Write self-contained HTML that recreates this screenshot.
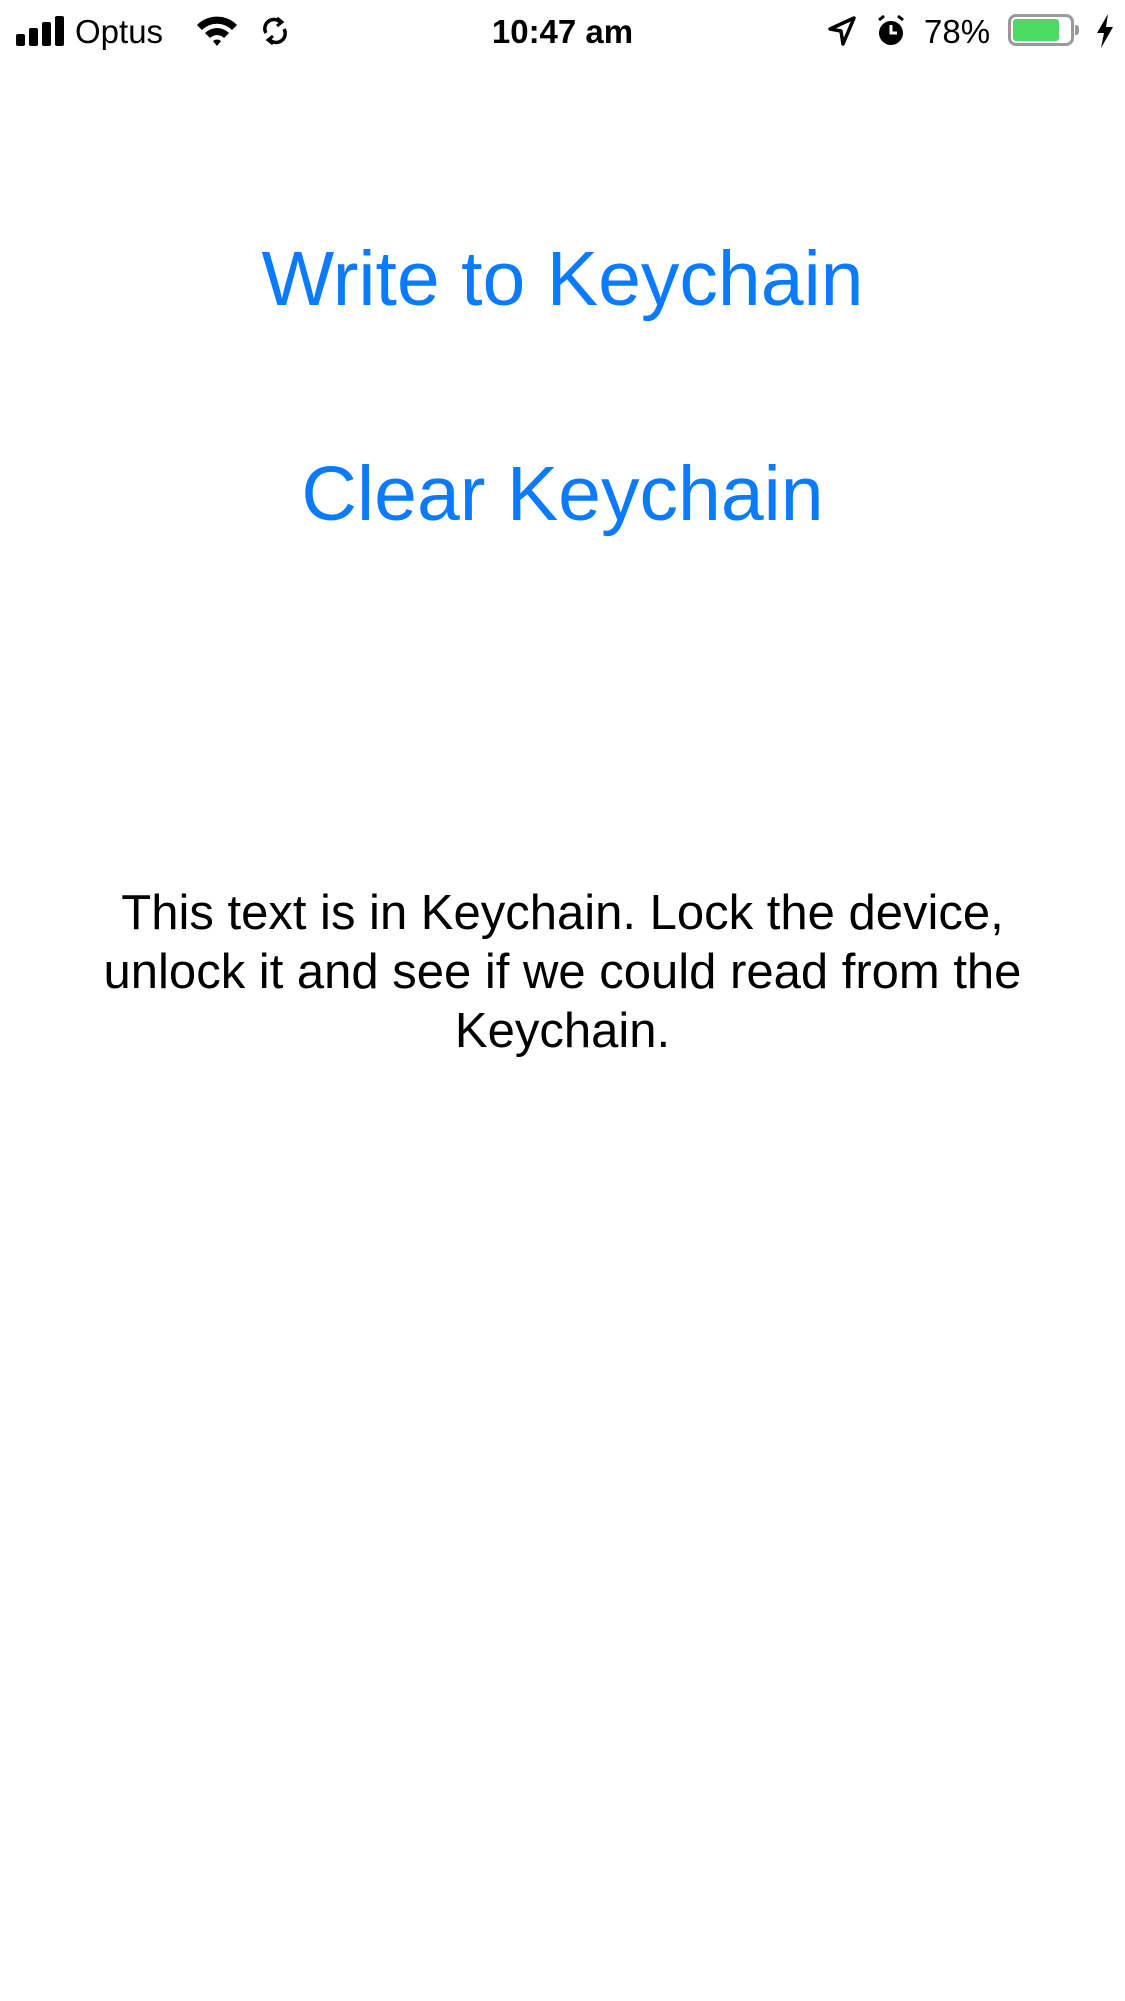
<!DOCTYPE html>
<html><head><meta charset="utf-8"><style>
html,body{margin:0;padding:0;background:#fff;width:1125px;height:2001px;overflow:hidden;font-family:"Liberation Sans",sans-serif;}
.a{position:absolute;white-space:nowrap;}
.btn{left:0;width:1125px;text-align:center;color:#0a7aff;font-size:77px;line-height:78px;}
.body{left:0;width:1125px;text-align:center;color:#000;font-size:49px;line-height:59px;}
.sb{font-size:33px;line-height:33px;color:#000;}
</style></head><body>
<svg class="a" style="left:16px;top:16px" width="52" height="30" viewBox="0 0 52 30">
<rect x="0" y="18" width="9" height="12" rx="2"/><rect x="13" y="12" width="9" height="18" rx="2"/><rect x="26" y="6" width="9" height="24" rx="2"/><rect x="39" y="0" width="9" height="30" rx="2"/></svg>
<div class="a sb" style="left:75px;top:15px">Optus</div>
<svg class="a" style="left:195px;top:14px" width="44" height="34" viewBox="0 0 44 34">
<path d="M2 11 A28 28 0 0 1 42 11 L37 16 A21 21 0 0 0 7 16Z"/><path d="M10 19 A17 17 0 0 1 34 19 L29 24 A10 10 0 0 0 15 24Z"/><path d="M18 27 A6 6 0 0 1 26 27 L22 32Z"/></svg>
<svg class="a" style="left:262px;top:16px" width="26" height="30" viewBox="0 0 26 30" fill="none" stroke="#000" stroke-width="3.5">
<path d="M4 17 A9 9 0 0 1 18 6"/><path d="M22 13 A9 9 0 0 1 8 24"/><path d="M15 2 L20 6 L15 10" stroke-width="3"/><path d="M11 20 L6 24 L11 28" stroke-width="3"/></svg>
<div class="a sb" style="left:0;width:1125px;text-align:center;top:15px;font-weight:bold">10:47 am</div>
<svg class="a" style="left:828px;top:16px" width="28" height="30" viewBox="0 0 28 30"><path d="M26 2 L2 13 L13 15 L15 28Z" fill="none" stroke="#000" stroke-width="3.5" stroke-linejoin="round"/></svg>
<svg class="a" style="left:876px;top:14px" width="30" height="34" viewBox="0 0 30 34"><circle cx="15" cy="19" r="12"/><path d="M15 11 V19 H21" stroke="#fff" stroke-width="3" fill="none"/><path d="M3 6 L8 2 M27 6 L22 2" stroke="#000" stroke-width="3"/></svg>
<div class="a sb" style="left:924px;top:15px">78%</div>
<div class="a" style="left:1008px;top:14px;width:66px;height:32px;border:3px solid #999;border-radius:8px;box-sizing:border-box"></div>
<div class="a" style="left:1013px;top:19px;width:46px;height:22px;background:#4cd964;border-radius:3px"></div>
<div class="a" style="left:1075px;top:25px;width:4px;height:10px;background:#999;border-radius:0 3px 3px 0"></div>
<svg class="a" style="left:1095px;top:14px" width="20" height="34" viewBox="0 0 20 34"><path d="M13 0 L2 19 H9 L6 34 L18 13 H11Z"/></svg>
<div class="a btn" style="top:240px">Write to Keychain</div>
<div class="a btn" style="top:455px">Clear Keychain</div>
<div class="a body" style="top:884px">This text is in Keychain. Lock the device,<br>unlock it and see if we could read from the<br>Keychain.</div>
</body></html>
